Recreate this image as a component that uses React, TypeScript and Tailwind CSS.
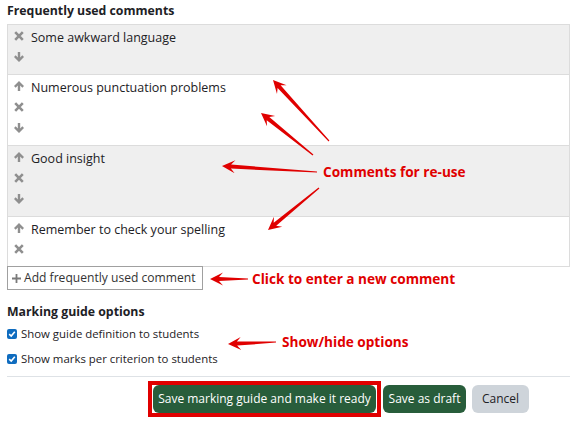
type Comment = { text: string; up: boolean; down: boolean; shaded: boolean };

const COMMENTS: Comment[] = [
  { text: 'Some awkward language', up: false, down: true, shaded: true },
  { text: 'Numerous punctuation problems', up: true, down: true, shaded: false },
  { text: 'Good insight', up: true, down: true, shaded: true },
  { text: 'Remember to check your spelling', up: true, down: false, shaded: false },
];

// tapered red arrow, tail -> head
function arrowPoints(x1: number, y1: number, x2: number, y2: number) {
  const dx = x2 - x1, dy = y2 - y1;
  const L = Math.hypot(dx, dy);
  const ux = dx / L, uy = dy / L;
  const px = -uy, py = ux;
  const head = 13, wing = 6.5, shaft = 2;
  const pt = (a: number, b: number) => `${(x1 + ux * a + px * b).toFixed(1)},${(y1 + uy * a + py * b).toFixed(1)}`;
  return [
    pt(0, -0.6),
    pt(L - head + 4, -shaft),
    pt(L - head, -wing),
    pt(L, 0),
    pt(L - head, wing),
    pt(L - head + 4, shaft),
    pt(0, 0.6),
  ].join(' ');
}

const ARROWS: [number, number, number, number][] = [
  [329, 141, 273, 80],
  [313, 155, 261, 113],
  [317, 172, 222, 166],
  [319, 188, 268, 230],
  [248, 279, 210, 279],
  [276, 342, 228, 344],
];

function UpIcon({ flip = false }: { flip?: boolean }) {
  return (
    <svg width={10} height={10} viewBox="0 0 10 10" className={flip ? 'rotate-180' : ''}>
      <polygon points="5,0 10,5 8.3,6.7 6.2,4.6 6.2,10 3.8,10 3.8,4.6 1.7,6.7 0,5" fill="#8f8f8f" />
    </svg>
  );
}

function XIcon() {
  return (
    <svg width={10} height={10} viewBox="0 0 10 10">
      <path d="M1.2 1.2 L8.8 8.8 M8.8 1.2 L1.2 8.8" stroke="#8f8f8f" strokeWidth={2.6} />
    </svg>
  );
}

function IconLine({ children }: { children: React.ReactNode }) {
  return <div className="h-[21px] flex items-center">{children}</div>;
}

function CommentRow({ c }: { c: Comment }) {
  return (
    <div className={`flex border-t border-[#dcdcdc] first:border-t-0 pb-[7px] ${c.shaded ? 'bg-[#efefef]' : 'bg-white'}`}>
      <div className="w-[23px] shrink-0 pl-[6px] flex flex-col">
        {c.up && <IconLine><UpIcon /></IconLine>}
        <IconLine><XIcon /></IconLine>
        {c.down && <IconLine><UpIcon flip /></IconLine>}
      </div>
      <div className="pt-[3px] leading-[20px] text-[12.5px] text-[#1d2125]">{c.text}</div>
    </div>
  );
}

function Checkbox({ label }: { label: string }) {
  return (
    <label className="flex items-center h-[25px] gap-[4px] text-[11.4px] text-[#1d2125]">
      <span className="w-[10px] h-[10px] rounded-[2px] bg-[#0f6cbf] flex items-center justify-center">
        <svg width={8} height={8} viewBox="0 0 8 8">
          <path d="M1.2 4.2 L3.2 6 L6.8 1.8" stroke="white" strokeWidth={1.6} fill="none" />
        </svg>
      </span>
      {label}
    </label>
  );
}

export default function App() {
  return (
    <div className="relative w-[570px] h-[421px] overflow-hidden bg-white px-[7px] font-['Open_Sans',sans-serif]">
      <h3 className="h-[24px] pt-[1px] leading-[20px] text-[12.3px] font-bold text-[#1d2125]">Frequently used comments</h3>

      <div className="w-[563px] border border-[#dcdcdc]">
        {COMMENTS.map((c) => (
          <CommentRow key={c.text} c={c} />
        ))}
      </div>

      <button className="flex items-center whitespace-nowrap h-[24px] w-[196px] -mt-px border border-[#a0a0a0] bg-white pl-[4px] text-[12.1px] text-[#333]">
        <svg width={9} height={9} viewBox="0 0 9 9" className="mr-[3px]">
          <path d="M4.5 0 V9 M0 4.5 H9" stroke="#7a7a7a" strokeWidth={1.8} />
        </svg>
        Add frequently used comment
      </button>

      <h3 className="mt-[12px] leading-[20px] text-[12.3px] font-bold text-[#1d2125]">Marking guide options</h3>
      <div className="-mt-[1px]">
        <Checkbox label="Show guide definition to students" />
        <Checkbox label="Show marks per criterion to students" />
      </div>

      <div className="mt-[5px] w-[563px] border-t border-[#dee2e6]" />

      <div className="flex items-start mt-[4px] pl-[141px]">
        <div className="border-[4px] border-[#e00000] px-px bg-white">
          <button className="h-[28px] w-[223px] whitespace-nowrap rounded-[6px] bg-[#285d3b] text-white text-[12px]">
            Save marking guide and make it ready
          </button>
        </div>
        <button className="mt-[4px] ml-[2px] h-[28px] w-[83px] whitespace-nowrap rounded-[6px] bg-[#285d3b] text-white text-[12px]">
          Save as draft
        </button>
        <button className="mt-[4px] ml-[6px] h-[28px] w-[57px] whitespace-nowrap rounded-[6px] bg-[#ced4da] text-[#1d2125] text-[12px]">
          Cancel
        </button>
      </div>

      {/* annotations */}
      <svg className="absolute inset-0 pointer-events-none" width={570} height={421}>
        {ARROWS.map((a, i) => (
          <polygon key={i} points={arrowPoints(...a)} fill="#e00000" />
        ))}
      </svg>
      <div className="absolute left-[323px] top-[162px] leading-[20px] text-[13.6px] font-bold text-[#e00000]">Comments for re-use</div>
      <div className="absolute left-[252px] top-[269px] leading-[20px] text-[13.6px] font-bold text-[#e00000]">Click to enter a new comment</div>
      <div className="absolute left-[282px] top-[332px] leading-[20px] text-[13.6px] font-bold text-[#e00000]">Show/hide options</div>
    </div>
  );
}
